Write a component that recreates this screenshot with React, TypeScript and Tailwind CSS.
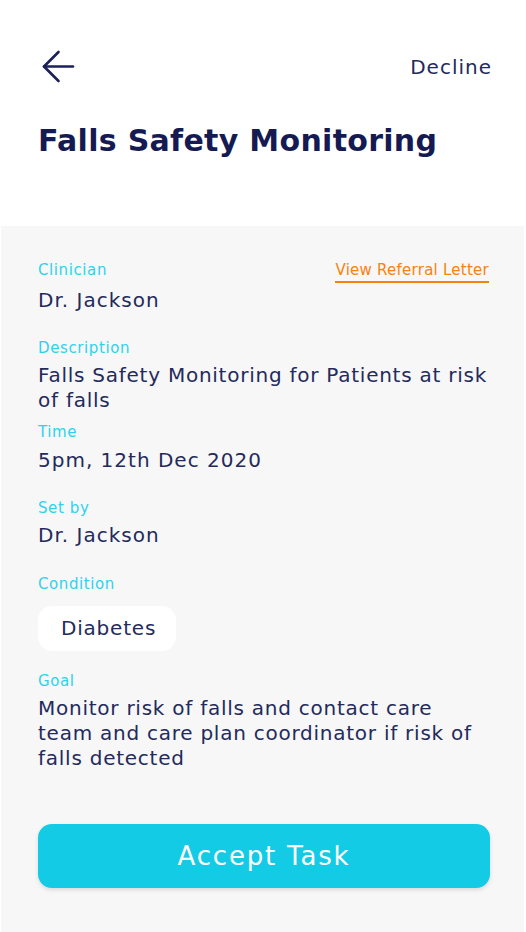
import React from 'react';

const font = { fontFamily: '"DejaVu Sans", "Open Sans", sans-serif' };

const Label = ({ children, className = '' }: { children: React.ReactNode; className?: string }) => (
  <div className={`text-[15px] leading-[20px] tracking-[0.6px] text-[#2fd2ee] ${className}`}>{children}</div>
);

const Value = ({ children, className = 'tracking-[1px]' }: { children: React.ReactNode; className?: string }) => (
  <div className={`text-[20px] leading-[25px] text-[#242a5c] whitespace-nowrap ${className}`}>{children}</div>
);

const App = () => {
  return (
    <div className="w-[526px] h-[932px] bg-white flex flex-col overflow-hidden" style={font}>
      <header className="h-[226px] shrink-0 pl-[42px] pr-[34px]">
        <div className="flex justify-between items-center pt-[50px]">
          <svg width="33" height="33" viewBox="0 0 33 33" fill="none" stroke="#1b2157" strokeWidth="2.6" strokeLinecap="round" strokeLinejoin="round">
            <path d="M31 16.5H2" />
            <path d="M16.5 2 2 16.5 16.5 31" />
          </svg>
          <span className="text-[20px] text-[#242a5c] tracking-[1px]">Decline</span>
        </div>
        <h1 className="mt-[40px] -ml-[4px] text-[30px] leading-[36px] font-bold tracking-[0.3px] text-[#151b52]">
          Falls Safety Monitoring
        </h1>
      </header>

      <main className="flex-1 ml-[1px] mr-[2px] bg-[#f7f7f7] pl-[37px] pr-[30px] pt-[34px]">
        <div className="flex justify-between items-start">
          <Label>Clinician</Label>
          <a className="mr-[5px] text-[15px] leading-[20px] tracking-[0.25px] text-[#f7820f] border-b-2 border-[#f7820f] pb-[1px]">
            View Referral Letter
          </a>
        </div>
        <Value className="mt-[5px] tracking-[1px]">Dr. Jackson</Value>

        <Label className="mt-[25px]">Description</Label>
        <Value className="mt-[5px] tracking-[0.75px]">
          Falls Safety Monitoring for Patients at risk
          <br />
          of falls
        </Value>

        <Label className="mt-[9px]">Time</Label>
        <Value className="mt-[6px] tracking-[1px]">5pm, 12th Dec 2020</Value>

        <Label className="mt-[25px]">Set by</Label>
        <Value className="mt-[5px] tracking-[1px]">Dr. Jackson</Value>

        <Label className="mt-[26px]">Condition</Label>
        <div className="mt-[12px] inline-flex items-center h-[45px] pl-[23px] pr-[20px] bg-white rounded-[14px]">
          <Value className="tracking-[0.8px]">Diabetes</Value>
        </div>

        <Label className="mt-[20px]">Goal</Label>
        <Value className="mt-[5px] tracking-[0.75px]">
          Monitor risk of falls and contact care
          <br />
          team and care plan coordinator if risk of
          <br />
          falls detected
        </Value>

        <button className="mt-[53px] w-[452px] h-[64px] rounded-[14px] bg-[#14cbe6] text-white text-[26px] tracking-[1.8px] shadow-[0_2px_4px_rgba(0,0,0,0.12)]">
          Accept Task
        </button>
      </main>
    </div>
  );
};

export default App;
